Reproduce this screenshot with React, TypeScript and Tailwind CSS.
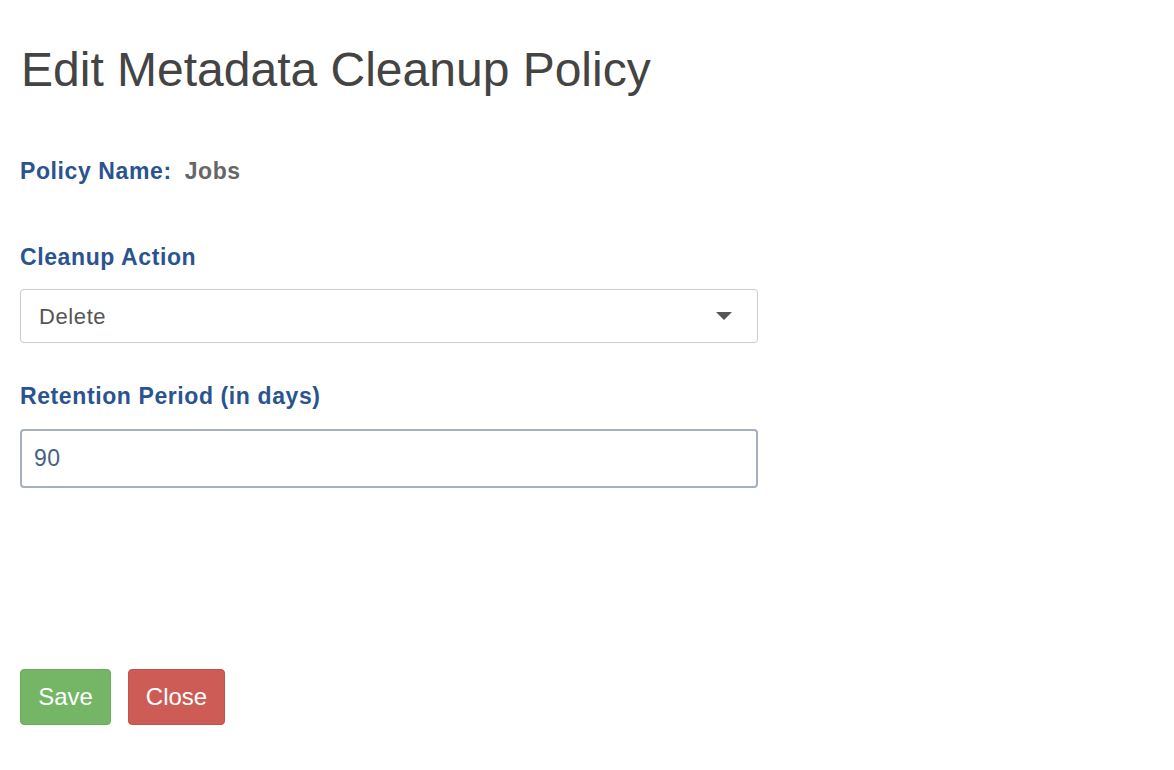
export default function App() {
  return (
    <div className="min-h-screen bg-white font-['Liberation_Sans',Arial,sans-serif] pl-5 pt-[42px]">
      <h1 className="text-[48px] leading-[56px] text-[#444] ml-[1px]">Edit Metadata Cleanup Policy</h1>

      <div className="mt-[58px] flex items-baseline gap-[13px] text-[23px] leading-[30px] font-bold tracking-[0.6px]">
        <span className="text-[#2a5490]">Policy Name:</span>
        <span className="text-[#666]">Jobs</span>
      </div>

      <div className="mt-[56px] w-[738px]">
        <label className="block text-[23px] leading-[30px] font-bold tracking-[0.6px] text-[#2a5490]">Cleanup Action</label>
        <div className="mt-[17px] h-[54px] rounded-[4px] border border-[#ccc] flex items-center justify-between pl-[18px] pr-[25px]">
          <span className="text-[22px] tracking-[0.6px] text-[#555]">Delete</span>
          <svg width="16" height="8" viewBox="0 0 16 8">
            <path d="M0 0h16L8 8z" fill="#555" />
          </svg>
        </div>

        <label className="block mt-[38px] text-[23px] leading-[30px] font-bold tracking-[0.6px] text-[#2a5490]">Retention Period (in days)</label>
        <div className="mt-[18px] h-[59px] rounded-[4px] border-2 border-[#a6b0c0] flex items-center pl-[12px]">
          <span className="text-[23px] tracking-[0.5px] text-[#4a5f85]">90</span>
        </div>
      </div>

      <div className="mt-[181px] flex gap-[17px]">
        <button className="h-[56px] w-[91px] rounded-[4px] bg-[#74b566] border border-[#6aab5c] text-white text-[24px]">Save</button>
        <button className="h-[56px] w-[97px] rounded-[4px] bg-[#cc5c55] border border-[#c2524b] text-white text-[24px]">Close</button>
      </div>
    </div>
  );
}
